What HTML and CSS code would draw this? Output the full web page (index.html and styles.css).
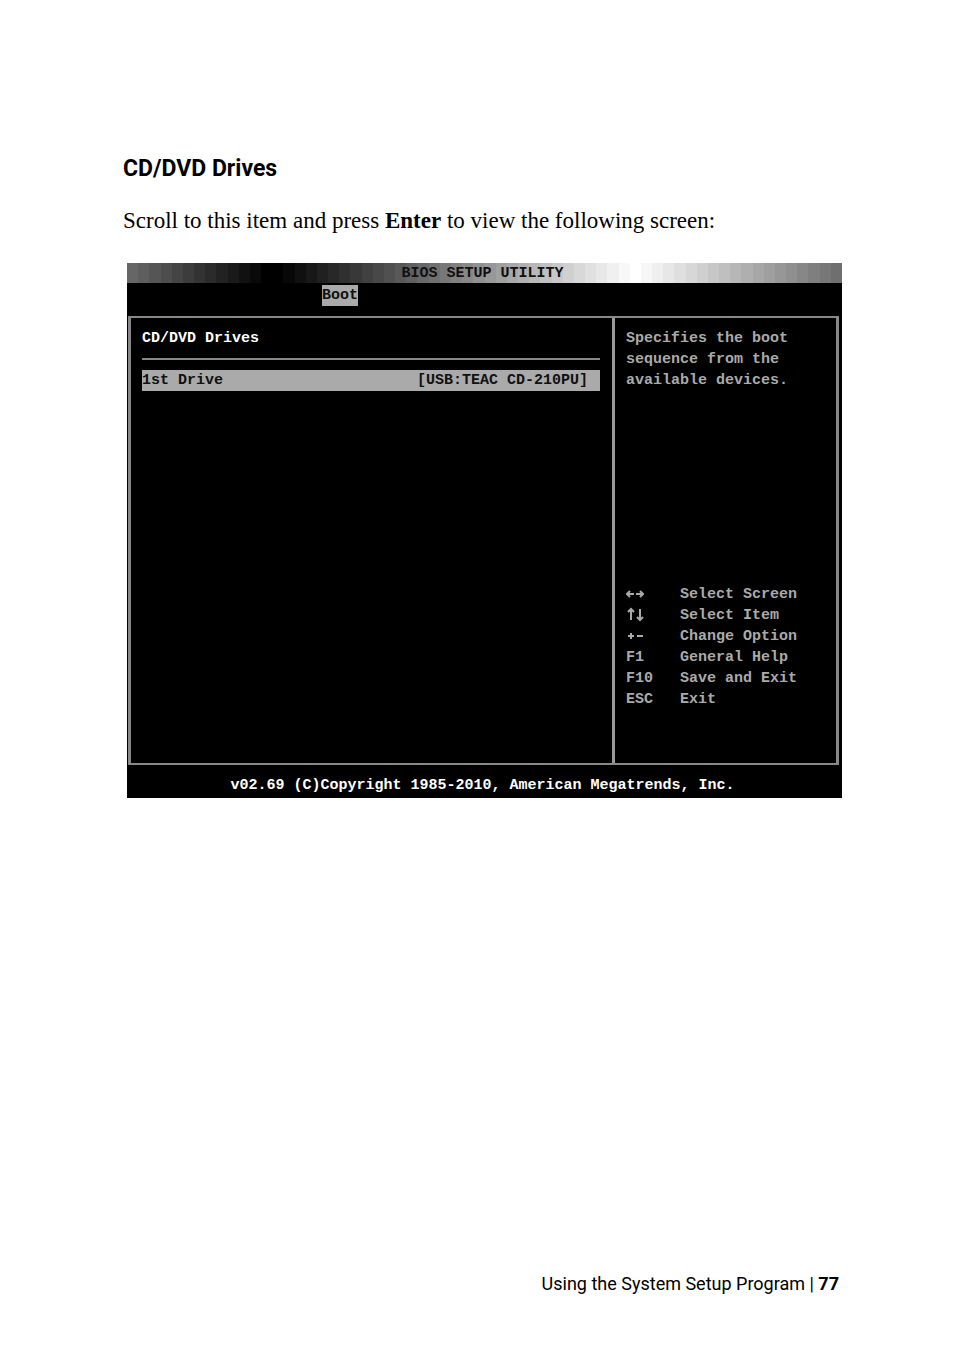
FILE: index.html
```html
<!DOCTYPE html>
<html lang="en">
<head>
<meta charset="utf-8">
<title>CD/DVD Drives</title>
<link rel="stylesheet" href="styles.css">
</head>
<body>
<div class="page">
  <main class="content">
    <h1 class="heading">CD/DVD Drives</h1>
    <p class="intro">Scroll to this item and press <strong>Enter</strong> to view the following screen:</p>
    <section class="bios">
      <header class="titlebar">
        <div class="shades" id="shades"></div>
        <span class="title">BIOS SETUP UTILITY</span>
      </header>
      <nav class="tabs"><button class="tab" type="button">Boot</button></nav>
      <div class="frame">
        <div class="panel">
          <h2 class="panel-title">CD/DVD Drives</h2>
          <button class="option" type="button"><span>1st Drive</span><span>[USB:TEAC CD-210PU]</span></button>
        </div>
        <aside class="help">
          <p class="help-text">Specifies the boot<br>sequence from the<br>available devices.</p>
          <dl class="keys">
            <dt><svg class="icon" viewBox="0 0 18 20" aria-label="Left and right"><path d="M1 10H8M4 7L1 10L4 13M10 10H17M14 7L17 10L14 13"/></svg></dt><dd>Select Screen</dd>
            <dt><svg class="icon" viewBox="0 0 18 20" aria-label="Up and down"><path d="M5 15V4M2 7L5 4L8 7M14 4V15M11 12L14 15L17 12"/></svg></dt><dd>Select Item</dd>
            <dt><svg class="icon" viewBox="0 0 18 20" aria-label="Plus and minus"><path d="M2 10H8M5 7V13M11 10H17"/></svg></dt><dd>Change Option</dd>
            <dt>F1</dt><dd>General Help</dd>
            <dt>F10</dt><dd>Save and Exit</dd>
            <dt>ESC</dt><dd>Exit</dd>
          </dl>
        </aside>
      </div>
      <footer class="copyright">v02.69 (C)Copyright 1985-2010, American Megatrends, Inc.</footer>
    </section>
  </main>
  <footer class="page-footer">Using the System Setup Program | <b>77</b></footer>
</div>
<script src="shades.js"></script>
</body>
</html>
```
FILE: styles.css
```css
* { box-sizing: border-box; }
body { margin: 0; background: #fff; color: #000; }
.page {
  min-height: 100vh;
  padding: 153px 112px 56px 123px;
  display: flex;
  flex-direction: column;
  justify-content: space-between;
}
.heading {
  margin: 0;
  font: bold 23px/32px Roboto, "Liberation Sans", sans-serif;
}
.intro {
  margin: 20px 0 26px;
  font: 23px/32px "Liberation Serif", serif;
}
.bios {
  margin-left: 4px;
  background: #000;
  color: #aaa;
  font: bold 15px/21px "Liberation Mono", monospace;
}
.titlebar { display: grid; height: 20px; }
.shades, .title { grid-area: 1 / 1; }
.shades { display: flex; height: 20px; }
.shade { flex: 1; }
.title { text-align: center; color: #111; padding-right: 4px; }
.tabs { display: flex; height: 33px; padding: 2px 0 0 195px; }
.tab {
  height: 21px;
  padding: 0;
  border: 0;
  background: #aaa;
  color: #111;
  font: inherit;
}
.frame {
  display: grid;
  grid-template-columns: 1fr 224px;
  min-height: 449px;
  margin: 0 3px 0 1px;
  border: 2px solid #888;
  border-width: 2px 3px;
}
.panel { padding: 10px 12px 0 11px; }
.panel-title {
  margin: 0;
  padding-bottom: 9px;
  border-bottom: 2px solid #888;
  color: #fff;
  font: inherit;
}
.option {
  display: flex;
  justify-content: space-between;
  width: 100%;
  margin-top: 10px;
  padding: 0 12px 0 0;
  border: 0;
  background: #aaa;
  color: #111;
  font: inherit;
}
.help {
  display: flex;
  flex-direction: column;
  justify-content: space-between;
  padding: 10px 11px 53px;
  border-left: 3px solid #999;
}
.help-text { margin: 0; }
.keys {
  display: grid;
  grid-template-columns: 54px 1fr;
  margin: 0;
}
.keys dt, .keys dd { margin: 0; }
.icon {
  display: block;
  width: 18px;
  height: 20px;
  fill: none;
  stroke: #aaa;
  stroke-width: 2;
}
.copyright {
  padding: 10px 4px 2px 0;
  text-align: center;
  color: #fff;
}
.page-footer {
  padding-right: 3px;
  text-align: right;
  font: 18px/28px Roboto, "Liberation Sans", sans-serif;
}
```
FILE: shades.js
```js
// Fills the title bar with 64 grey steps: dark grey, black, white, grey.
const bar = document.getElementById("shades");
for (let i = 0; i < 64; i++) {
  let v = i < 13 ? 102 - 8.5 * i : i < 46 ? 8 * (i - 13) : 255 - 8 * (i - 45);
  v = Math.round(Math.max(0, Math.min(255, v)));
  const cell = document.createElement("span");
  cell.className = "shade";
  cell.style.background = `rgb(${v},${v},${v})`;
  bar.append(cell);
}
```
